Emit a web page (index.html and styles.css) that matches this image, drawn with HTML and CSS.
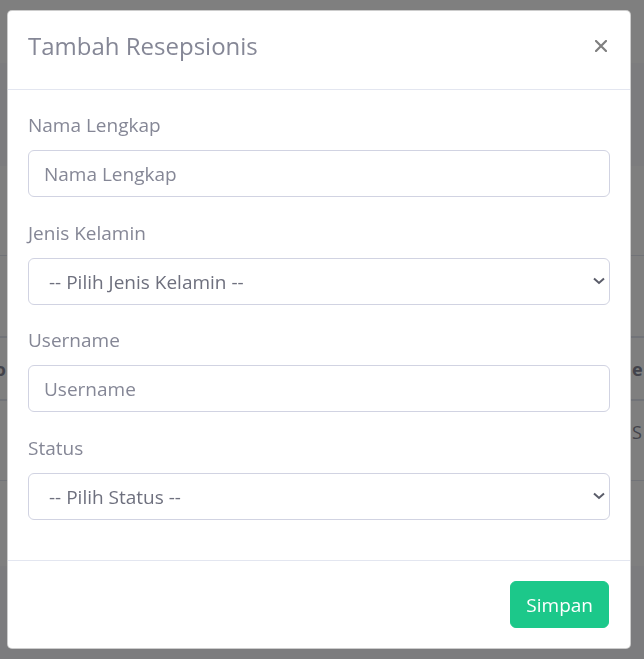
FILE: index.html
```html
<!DOCTYPE html>
<html lang="id">
<head>
<meta charset="utf-8">
<title>Tambah Resepsionis</title>
<link rel="stylesheet" href="styles.css">
</head>
<body>
<div class="page">
  <div class="topbar"></div>
  <div class="page-head"></div>
  <div class="card-top"></div>
  <div class="tool-row"></div>
  <div class="trow thead">
    <div class="cell-left"><span class="clip-left">No</span></div>
    <div class="cell-right">e</div>
  </div>
  <div class="trow tbody">
    <div class="cell-left"></div>
    <div class="cell-right">S</div>
  </div>
  <div class="tail"></div>
  <div class="foot"></div>
</div>

<div class="backdrop"></div>

<div class="modal">
  <div class="modal-dialog">
    <div class="modal-header">
      <h5 class="modal-title">Tambah Resepsionis</h5>
      <button class="close" type="button" aria-label="Close">
        <svg width="12" height="12" viewBox="0 0 12 12"><path d="M1 1L11 11M11 1L1 11" stroke="currentColor" stroke-width="2.2" stroke-linecap="square"/></svg>
      </button>
    </div>
    <div class="modal-body">
      <div class="form-group">
        <label class="label">Nama Lengkap</label>
        <input class="control" type="text" placeholder="Nama Lengkap">
      </div>
      <div class="form-group g2">
        <label class="label">Jenis Kelamin</label>
        <div class="select-wrap">
          <select class="control select">
            <option>-- Pilih Jenis Kelamin --</option>
            <option>Laki-laki</option>
            <option>Perempuan</option>
          </select>
          <svg class="chev" width="12" height="8" viewBox="0 0 12 8"><path d="M1 1.5L6 6L11 1.5" fill="none" stroke="currentColor" stroke-width="2"/></svg>
        </div>
      </div>
      <div class="form-group">
        <label class="label">Username</label>
        <input class="control" type="text" placeholder="Username">
      </div>
      <div class="form-group last">
        <label class="label">Status</label>
        <div class="select-wrap">
          <select class="control select">
            <option>-- Pilih Status --</option>
            <option>Aktif</option>
            <option>Nonaktif</option>
          </select>
          <svg class="chev" width="12" height="8" viewBox="0 0 12 8"><path d="M1 1.5L6 6L11 1.5" fill="none" stroke="currentColor" stroke-width="2"/></svg>
        </div>
      </div>
    </div>
    <div class="modal-footer">
      <button class="btn-success" type="button">Simpan</button>
    </div>
  </div>
</div>
</body>
</html>
```

FILE: styles.css
```css
* { box-sizing: border-box; }

html, body {
  margin: 0;
  padding: 0;
  height: 100%;
  overflow: hidden;
}

body {
  font-family: "Open Sans", "Noto Sans", "Liberation Sans", sans-serif;
  background: #f8f9fc;
  color: #858796;
}

/* background page (covered by the backdrop) */
.page { width: 644px; }
.topbar { height: 63px; background: #ffffff; }
.page-head { height: 103px; background: #f8f9fc; }
.card-top { height: 90px; background: #ffffff; border-bottom: 1px solid #e3e6f0; }
.tool-row { height: 82px; background: #ffffff; border-bottom: 2px solid #e3e6f0; }
.trow {
  display: flex;
  background: #ffffff;
  font-size: 18px;
  line-height: 24px;
  color: #858796;
  overflow: hidden;
}
.thead {
  height: 63px;
  align-items: center;
  font-weight: 700;
  border-bottom: 2px solid #e3e6f0;
}
.tbody {
  height: 80px;
  padding-top: 19px;
  border-bottom: 1px solid #e3e6f0;
}
.cell-left { width: 632px; flex: none; }
.clip-left { display: inline-block; margin-left: -20px; }
.cell-right { flex: none; white-space: nowrap; }
.tail { height: 85px; background: #ffffff; }
.foot { height: 100px; background: #f8f9fc; }

.backdrop {
  position: fixed;
  inset: 0;
  background: rgba(0, 0, 0, 0.5);
}

.modal {
  position: fixed;
  inset: 0;
}

.modal-dialog {
  margin: 10px 0 0 7px;
  width: 624px;
  background: #ffffff;
  border: 1px solid rgba(0, 0, 0, 0.2);
  border-radius: 5px;
  display: flex;
  flex-direction: column;
}

.modal-header {
  display: flex;
  align-items: flex-start;
  justify-content: space-between;
  height: 79px;
  padding: 17px 20px 0;
  border-bottom: 1px solid #e3e6f0;
}

.modal-title {
  margin: 0;
  font-size: 24px;
  font-weight: 400;
  color: #858796;
  line-height: 36px;
}

.close {
  border: 0;
  background: transparent;
  padding: 0;
  margin: 12px 3px 0 0;
  color: #7f7f7f;
  display: flex;
  cursor: pointer;
}

.modal-body {
  padding: 21px 20px 20px;
}

.form-group {
  display: flex;
  flex-direction: column;
  margin-bottom: 22px;
}
.form-group.g2 { margin-bottom: 21px; }
.form-group.last { margin-bottom: 20px; }

.label {
  font-size: 19px;
  line-height: 28px;
  margin-bottom: 11px;
  color: #858796;
}

.control {
  width: 100%;
  height: 47px;
  border: 1px solid #d1d3e2;
  border-radius: 6px;
  padding: 0 15px;
  font-family: inherit;
  font-size: 19px;
  color: #6e707e;
  background: #ffffff;
  outline: none;
}
.control::placeholder { color: #858796; }

.select-wrap { position: relative; }
.select {
  appearance: none;
  -webkit-appearance: none;
  padding-left: 20px;
  color: #6e707e;
}
.chev {
  position: absolute;
  right: 5px;
  top: 19px;
  color: #5a5c69;
  pointer-events: none;
}

.modal-footer {
  display: flex;
  justify-content: flex-end;
  padding: 20px;
  border-top: 1px solid #e3e6f0;
}

.btn-success {
  height: 47px;
  padding: 0 15px;
  margin-right: 1px;
  background: #1cc88a;
  color: #ffffff;
  border: 1px solid #1cc88a;
  border-radius: 6px;
  font-family: inherit;
  font-size: 19px;
  cursor: pointer;
}
```
